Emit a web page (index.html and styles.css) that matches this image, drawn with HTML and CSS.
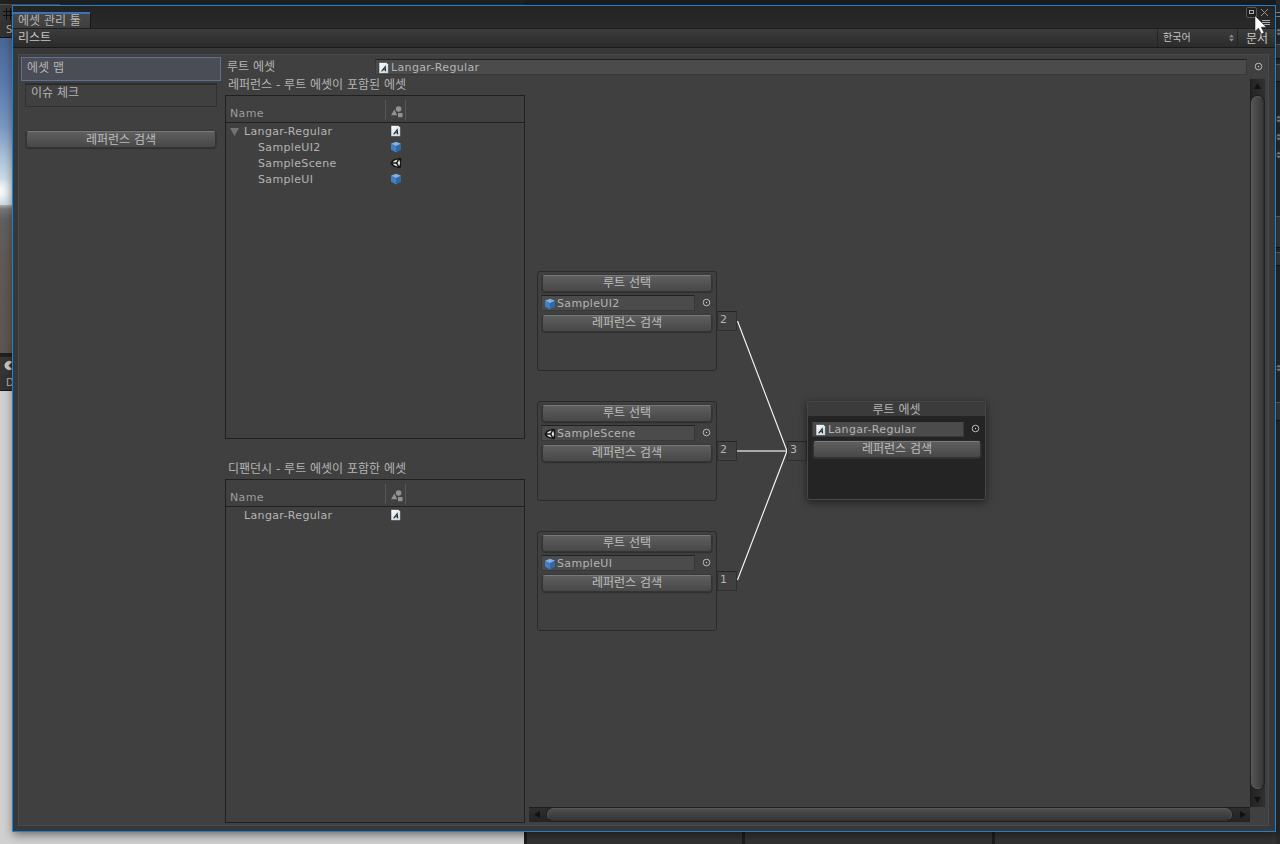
FILE: index.html
```html
<!DOCTYPE html>
<html lang="ko">
<head>
<meta charset="utf-8">
<title>에셋 관리 툴</title>
<link rel="stylesheet" href="styles.css">
</head>
<body>
<svg class="defs" aria-hidden="true">
  <defs>
    <linearGradient id="paper" x1="0" y1="0" x2="1" y2="1"><stop offset="0" stop-color="#fff"/><stop offset="1" stop-color="#c3d3dd"/></linearGradient>
    <symbol id="font" viewBox="0 0 12 12"><path d="M1 .5h7.500l2 2v9H1z" fill="url(#paper)" stroke="#2b2f32" stroke-width=".5"/><path d="M3.600 9.300 7.200 4.700l.4 4.600M5 7.800h2.400" fill="none" stroke="#2c2c2c" stroke-width="1.100"/></symbol>
    <symbol id="cube" viewBox="0 0 12 12"><path d="M6 .8 11 2.800v5.600L6 11.400 1 8.400V2.800z" fill="#2f5f9a"/><path d="M6 .8l5 2L6 5.200 1 2.800z" fill="#86b0dc"/><path d="M1 2.800 6 5.200v6.200L1 8.400z" fill="#437fc2"/><path d="M11 2.800 6 5.200v6.200l5-3z" fill="#3267a6"/></symbol>
    <symbol id="scene" viewBox="0 0 12 12"><path d="M.3 6 3 2.500 9.500.8 11.300 1.500 11 10.500l-1.500.7L3 9.500z" fill="#141414"/><path d="M2.600 5.300 4.700 3.400 7.700 2.500 6.200 5.300zM2.600 6.700l2.100 1.900 3 .9L6.200 6.700zM9.200 2.800l1 3.200-1 3.300L7.500 6z" fill="#e6e6e0"/></symbol>
    <symbol id="kind" viewBox="0 0 12 12"><path d="M0 9.200 3.400 3.400 6.200 9.200z"/><circle cx="7.600" cy="3" r="2.800"/><path d="M7 7h4.500v4.200H7z"/></symbol>
    <symbol id="pick" viewBox="0 0 9 9"><circle cx="4.500" cy="4.500" r="3.300" fill="none" stroke="#b8b8b8" stroke-width="1"/><circle cx="4.500" cy="4.500" r=".7" fill="#ccc"/></symbol>
    <symbol id="updown" viewBox="0 0 5 8"><path d="M0 3.200 2.500.4 5 3.200zM0 4.800h5L2.500 7.600z" fill="#8e8e8e"/></symbol>
  </defs>
</svg>

<div class="desktop">
  <div class="scene-side">
    <div class="side-tab"><svg width="12" height="12" viewBox="0 0 12 12"><path d="M3.500 0v12M7.500 0v12M0 3.500h12M0 7.500h12" stroke="#0f0f0f"/></svg></div>
    <div class="side-bar">S</div>
    <div class="sky"></div>
    <div class="ground"></div>
    <div class="side-tab game"><svg width="12" height="12" viewBox="0 0 12 12"><path d="M9 2A4.500 4.500 0 1 0 9 9L5.500 5.500z" fill="#c8c8c8"/></svg></div>
    <div class="side-bar">D</div>
    <div class="game-view"></div>
  </div>
  <div class="docks"><div class="dock d1"></div><div class="dock d2"></div><div class="dock d3"></div></div>
  <div class="inspector">
    <i class="lines"></i><svg class="a1"><use href="#updown"/></svg><i class="block b1"></i><i class="block b2"></i>
    <svg class="a2"><use href="#updown"/></svg><svg class="a3"><use href="#updown"/></svg><svg class="a3"><use href="#updown"/></svg>
    <i class="block b3"></i><i class="block b4"></i><svg class="a4"><use href="#updown"/></svg><i class="block b5"></i>
  </div>
</div>

<div class="window">
  <header class="titlebar">
    <div class="tab ko">에셋 관리 툴</div>
    <div class="controls">
      <svg width="26" height="24" viewBox="0 0 26 24"><rect x=".5" y="1.500" width="10" height="10" rx="1.500" fill="#1f1f1f" stroke="#555"/><rect x="3.500" y="4.500" width="4" height="3" fill="#222" stroke="#aaa"/><path d="M15 3l7 7M22 3l-7 7" stroke="#929292"/><path d="M16 14.500h8M16 16.500h8M16 18.500h8" stroke="#aaa"/></svg>
    </div>
  </header>
  <nav class="toolbar ko">
    <span class="menu">리스트</span>
    <span class="language">한국어<svg width="5" height="8"><use href="#updown"/></svg></span>
    <span class="docs">문서</span>
  </nav>
  <main class="body">
    <aside class="sidebar ko">
      <div class="mode selected">에셋 맵</div>
      <div class="mode">이슈 체크</div>
      <button class="btn">레퍼런스 검색</button>
    </aside>
    <section class="content">
      <div class="root-row"><label class="ko">루트 에셋</label><div class="field"><svg class="ic"><use href="#font"/></svg>Langar-Regular</div><svg class="pick"><use href="#pick"/></svg></div>
      <div class="split">
        <div class="trees">
          <h2 class="ko">레퍼런스 - 루트 에셋이 포함된 에셋</h2>
          <div class="tree">
            <div class="head"><span>Name</span><b><svg class="kind"><use href="#kind"/></svg></b></div>
            <div class="row"><svg class="fold" viewBox="0 0 9 8"><path d="M0 0h9L4.500 8z"/></svg><span>Langar-Regular</span><svg class="ic"><use href="#font"/></svg></div>
            <div class="row child"><span>SampleUI2</span><svg class="ic"><use href="#cube"/></svg></div>
            <div class="row child"><span>SampleScene</span><svg class="ic"><use href="#scene"/></svg></div>
            <div class="row child"><span>SampleUI</span><svg class="ic"><use href="#cube"/></svg></div>
          </div>
          <h2 class="ko second">디팬던시 - 루트 에셋이 포함한 에셋</h2>
          <div class="tree">
            <div class="head"><span>Name</span><b><svg class="kind"><use href="#kind"/></svg></b></div>
            <div class="row"><span>Langar-Regular</span><svg class="ic"><use href="#font"/></svg></div>
          </div>
        </div>
        <div class="graph">
          <div class="canvas">
            <svg class="links" width="721" height="727"><path d="M208 372h50" stroke="#a9a9a9" stroke-width="2"/><path d="M208.500 242 258 372 208.500 501" fill="none" stroke="#f2f2f2" stroke-width="1.200"/></svg>
            <article class="node n1"><button class="btn ko">루트 선택</button><div class="pickrow"><div class="field"><svg class="ic"><use href="#cube"/></svg>SampleUI2</div><svg class="pick"><use href="#pick"/></svg></div><button class="btn ko">레퍼런스 검색</button><span class="port">2</span></article>
            <article class="node n2"><button class="btn ko">루트 선택</button><div class="pickrow"><div class="field"><svg class="ic"><use href="#scene"/></svg>SampleScene</div><svg class="pick"><use href="#pick"/></svg></div><button class="btn ko">레퍼런스 검색</button><span class="port">2</span></article>
            <article class="node n3"><button class="btn ko">루트 선택</button><div class="pickrow"><div class="field"><svg class="ic"><use href="#cube"/></svg>SampleUI</div><svg class="pick"><use href="#pick"/></svg></div><button class="btn ko">레퍼런스 검색</button><span class="port">1</span></article>
            <span class="port root-port">3</span>
            <article class="root"><h3 class="ko">루트 에셋</h3><div class="pickrow"><div class="field"><svg class="ic"><use href="#font"/></svg>Langar-Regular</div><svg class="pick"><use href="#pick"/></svg></div><button class="btn ko">레퍼런스 검색</button></article>
          </div>
          <div class="vbar"><svg width="7" height="6"><path d="M0 6h7L3.500 0z"/></svg><i></i><svg width="7" height="6"><path d="M0 0h7L3.500 6z"/></svg></div>
          <div class="hbar"><svg width="6" height="7"><path d="M6 0v7L0 3.500z"/></svg><i></i><svg width="6" height="7"><path d="M0 0v7l6-3.500z"/></svg></div>
        </div>
      </div>
    </section>
  </main>
</div>
<svg class="cursor" width="14" height="20" viewBox="0 0 14 20"><path d="M1 .8v15.700l3.500-3.300 2.900 5.800 2.600-1.200-2.700-5.600h5z" fill="#fff" stroke="#111" stroke-width=".5"/></svg>
</body>
</html>
```
FILE: styles.css
```css
* { box-sizing: border-box; }
body { margin: 0; width: 1280px; height: 844px; overflow: hidden; position: relative; background: #282828; color: #b4b4b4; font: 11px/16px "DejaVu Sans", "Noto Sans CJK KR", sans-serif; }
.ko { font-size: 12px; }
.defs { position: absolute; width: 0; height: 0; }
h2, h3 { margin: 0; font-weight: normal; }

/* Editor behind the window */
.desktop { display: flex; height: 844px; background: linear-gradient(#202020 4px, #292929 4px); }
.scene-side { width: 524px; display: flex; flex-direction: column; padding-top: 4px; }
.side-tab { height: 17px; padding: 3px 0 0 3px; background: #363636; border-top: 1px solid #505050; width: 60px; }
.side-tab svg { display: block; }
.side-bar { height: 17px; padding-left: 6px; border-bottom: 1px solid #181818; background: #333; font-size: 10px; line-height: 17px; }
.sky { height: 167px; background: radial-gradient(circle at 0 153px, #f4f8f8 3px, #c9d9e5 14px, #a9c0d8 35px, #7997c0 65px, #587aad 110px, #455e88 170px); }
.ground { height: 148px; background: linear-gradient(#aaa, #777 4px, #606060 14px, #605a55 50px, #5c5651); }
.game { height: 21px; border-top: 4px solid #202020; }
.game-view { flex: 1; background: #d0d0d0; }
.docks { width: 752px; padding: 831px 0 0 3px; display: flex; gap: 3px; background: #1d1d1d; }
.dock { background: #333; }
.d1 { width: 215px; } .d2 { width: 247px; } .d3 { flex: 1; }
.inspector { width: 4px; overflow: hidden; background: #2b2b2b; display: flex; flex-direction: column; }
.inspector > * { flex: none; width: 5px; }
.lines { height: 5px; margin-top: 12px; border-top: 1px solid #999; border-bottom: 1px solid #999; }
.inspector svg { height: 8px; }
.a1 { margin-top: 11px; } .a2 { margin-top: 33px; } .a3 { margin-top: 10px; }
.block { background: #3c3c3c; border-top: 1px solid #666; border-bottom: 1px solid #151515; }
.b1 { height: 15px; margin-top: 8px; } .b2 { height: 18px; margin-top: 5px; }
.b3 { height: 32px; margin-top: 57px; } .b4 { height: 14px; margin-top: 4px; }
.a4 { margin-top: 98px; } .b5 { height: 19px; margin-top: 30px; }

/* Window frame */
.window { position: absolute; left: 12px; top: 5px; width: 1264px; height: 827px; border: 1px solid #1c82d4; background: #383838; display: flex; flex-direction: column; box-shadow: 1px 3px 9px #0007; }
.titlebar { height: 22px; display: flex; justify-content: space-between; background: linear-gradient(#232323, #2a2a2a); }
.tab { width: 78px; height: 16px; margin-top: 6px; padding-left: 5px; background: linear-gradient(#484848, #3e3e3e); border-top: 2px solid #3a74b8; border-right: 1px solid #191919; border-radius: 0 2px 0 0; line-height: 15px; white-space: nowrap; }
.controls { width: 29px; height: 22px; }
.toolbar { height: 20px; display: flex; align-items: stretch; line-height: 18px; background: linear-gradient(#3c3c3c, #2b2b2b); border-top: 1px solid #1e1e1e; border-bottom: 1px solid #191919; color: #c4c4c4; }
.menu { flex: 1; padding-left: 5px; }
.language { width: 80px; display: flex; justify-content: space-between; align-items: center; padding: 0 3px 0 5px; border-left: 1px solid #252525; font-size: 10px; }
.docs { width: 38px; padding-left: 8px; line-height: 20px; border-left: 1px solid #252525; }
.body { flex: 1; min-height: 0; margin: 6px 6px 5px 5px; border: 1px solid #4a4a4a; background: #404040; display: flex; padding: 2px 4px 3px 2px; }
.sidebar { width: 200px; flex: none; }
.mode { height: 24px; margin: 2px 4px 0; padding: 1px 5px; line-height: 15px; border: 1px solid #313131; border-top: 2px solid #2c2c2c; }
.mode.selected { margin: 0; padding: 1px 5px; line-height: 18px; background: #4a4d55; border: 1px solid #5d7196; }
.btn { display: block; width: 100%; height: 17px; padding: 0 0 1px; border: 1px solid #343434; border-top-color: #797979; border-radius: 3px; background: linear-gradient(#5e5e5e, #484848); color: #bdbdbd; font-family: inherit; line-height: 13px; box-shadow: 0 0 0 .5px #303030, 0 1px 1px #303030; text-align: center; }
.sidebar .btn { width: 190px; margin: 24px 5px 0; padding: 1px 0 0; font-size: 12px; }

/* Asset trees */
.content { width: 1044px; flex: none; padding: 2px 0 0 4px; }
.root-row { display: flex; height: 16px; align-items: center; }
.root-row label { width: 150px; padding-left: 2px; }
.field { display: flex; align-items: center; height: 16px; padding: 1px 0 0 2px; gap: 1px; background: #4b4b4b; border: 1px solid #383838; border-top-color: #202020; font-size: 11px; letter-spacing: .35px; color: #b4b4b4; }
.root-row .field { width: 872px; }
.pick { width: 9px; height: 9px; }
.root-row .pick { margin: -1px 0 0 7px; }
.ic { width: 12px; height: 12px; flex: none; display: block; }
.split { display: flex; }
.trees { width: 300px; flex: none; }
h2 { height: 20px; padding: 2px 0 0 3px; line-height: 16px; white-space: nowrap; }
h2.second { height: 40px; padding-top: 22px; }
.tree { height: 344px; border: 1px solid #202020; }
.head { height: 27px; border-bottom: 1px solid #202020; display: flex; color: #9c9c9c; letter-spacing: .35px; }
.head span { width: 159px; padding: 10px 0 0 4px; }
.head b { width: 21px; height: 20px; margin-top: 4px; padding: 6px 0 0 5px; border: solid #565656; border-width: 0 1px; }
.kind { width: 12px; height: 12px; display: block; fill: #929292; }
.row { display: flex; height: 16px; align-items: center; position: relative; padding-left: 18px; letter-spacing: .35px; }
.row span { width: 146px; padding-top: 2px; }
.fold { position: absolute; left: 4px; top: 5px; width: 9px; height: 8px; fill: #737373; }
.row.child { padding-left: 32px; }
.child span { width: 132px; }

/* Reference graph */
.graph { width: 736px; height: 744px; flex: none; margin: 4px 0 0 4px; display: grid; grid-template: 728px 15px / 721px 15px; }
.canvas { position: relative; }
.links { position: absolute; left: 0; top: 0; }
.node { position: absolute; left: 8px; width: 180px; height: 100px; padding: 3px 4px; border: 1px solid #2a2a2a; border-radius: 3px; }
.n1 { top: 192px; } .n2 { top: 322px; } .n3 { top: 452px; }
.pickrow { display: flex; align-items: center; justify-content: space-between; height: 16px; margin: 3px 0 4px -1px; padding-right: 1px; }
.pickrow .field { width: 154px; height: 16px; }
.pickrow .pick { margin-top: -1px; }
.port { position: absolute; left: 179px; top: 39px; width: 20px; height: 20px; padding-left: 2px; line-height: 16px; border: 1px solid #303030; border-top-color: #242424; }
.root-port { left: 258px; top: 362px; }
.root { position: absolute; left: 278px; top: 322px; width: 179px; height: 99px; border: 1px solid #474747; border-radius: 3px; background: #242424; padding: 0 4px 0 5px; box-shadow: 0 2px 9px #0008; }
.root h3 { height: 14px; margin: 0 -4px 5px -5px; background: #3b3b3b; text-align: center; line-height: 16px; }
.root .pickrow { margin: 0 0 4px -1px; }
.root .field { width: 152px; }
.vbar { display: flex; flex-direction: column; align-items: center; padding: 4px 1px 4px 0; background: linear-gradient(90deg, #242424, #303030); border-left: 1px solid #1e1e1e; }
.vbar svg, .hbar svg { fill: #111; flex: none; }
.vbar i { flex: 1; width: 13px; margin: 7px 0 8px; border-radius: 7px; background: linear-gradient(90deg, #545454, #383838); border: 1px solid #5a5a5a; border-right-color: #303030; box-shadow: 0 0 0 1px #202020; }
.hbar { display: flex; align-items: center; padding: 0 4px 1px 5px; background: linear-gradient(#2e2e2e, #232323); border-top: 1px solid #1e1e1e; }
.hbar i { flex: 1; height: 13px; margin: 0 8px 0 7px; border-radius: 7px; background: linear-gradient(#4d4d4d, #353535); border: 1px solid #585858; border-bottom-color: #303030; box-shadow: 0 0 0 1px #202020; }
.cursor { position: absolute; left: 1254px; top: 15px; }
```
